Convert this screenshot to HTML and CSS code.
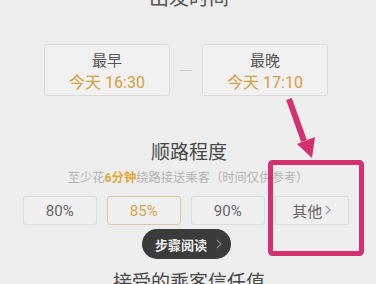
FILE: index.html
```html
<!DOCTYPE html>
<html lang="zh">
<head>
<meta charset="utf-8">
<link rel="stylesheet" href="styles.css">
</head>
<body>
<div class="page">
  <div class="title">出发时间</div>
  <div class="times">
    <div class="card">
      <div class="card-label">最早</div>
      <div class="card-time">今天 16:30</div>
    </div>
    <div class="dash"></div>
    <div class="card">
      <div class="card-label">最晚</div>
      <div class="card-time">今天 17:10</div>
    </div>
  </div>
  <div class="heading">顺路程度</div>
  <div class="sub">至少花<b>6分钟</b>绕路接送乘客（时间仅供参考）</div>
  <div class="opts">
    <div class="opt">80%</div>
    <div class="opt sel">85%</div>
    <div class="opt">90%</div>
    <div class="opt">其他<svg class="chev" width="6" height="10" viewBox="0 0 6 10"><polyline points="1,1 5,5 1,9" fill="none" stroke="#9a9a9a" stroke-width="1.1"/></svg></div>
  </div>
  <div class="pill-row">
    <div class="pill">步骤阅读<svg class="pill-chev" width="6" height="10" viewBox="0 0 6 10"><polyline points="1,1 5,5 1,9" fill="none" stroke="#8a8a8a" stroke-width="1.1"/></svg></div>
  </div>
  <div class="heading bottom">接受的乘客信任值</div>
  <svg class="annot" width="376" height="284" viewBox="0 0 376 284">
    <line x1="289" y1="99" x2="304" y2="141" stroke="#d4306f" stroke-width="6"/>
    <polygon points="297,144 315,137 312,158" fill="#d4306f"/>
    <rect x="270.5" y="162.5" width="91" height="91" rx="2" fill="none" stroke="#d4306f" stroke-width="5"/>
  </svg>
</div>
</body>
</html>
```
FILE: styles.css
```css
html, body {
  margin: 0;
  padding: 0;
  background: #eeeeee;
}
.page {
  position: relative;
  width: 376px;
  height: 284px;
  overflow: hidden;
  font-family: "Roboto", "Noto Sans CJK SC", sans-serif;
  color: #555;
}
.title {
  margin-top: -12px;
  text-align: center;
  font-size: 20px;
  line-height: 20px;
  color: #555;
  padding-left: 2px;
}
.times {
  display: flex;
  justify-content: center;
  align-items: center;
  margin-top: 36px;
  padding-right: 4px;
}
.card {
  box-sizing: border-box;
  width: 126px;
  height: 52px;
  border: 1px solid #dcdcdc;
  border-radius: 3px;
  background: #f1f1f1;
  padding-top: 7px;
  text-align: center;
}
.card-label {
  font-size: 15px;
  line-height: 18px;
  color: #555;
}
.card-time {
  margin-top: 2px;
  font-size: 16px;
  line-height: 22px;
  color: #d4a043;
}
.dash {
  width: 12px;
  height: 1px;
  background: #cccccc;
  margin: 0 10px;
}
.heading {
  margin-top: 45px;
  text-align: center;
  font-size: 19px;
  line-height: 24px;
  color: #484848;
  padding-left: 2px;
}
.sub {
  margin-top: 5px;
  text-align: center;
  font-size: 12.3px;
  line-height: 16px;
  color: #b3b3b3;
}
.sub b {
  color: #e0a83c;
  font-weight: 700;
}
.opts {
  display: flex;
  justify-content: flex-start;
  gap: 10.5px;
  margin-top: 10px;
  padding-left: 23px;
}
.opt {
  box-sizing: border-box;
  width: 73.5px;
  height: 29px;
  border: 1px solid #dddddd;
  border-radius: 3px;
  background: #f0f0f0;
  display: flex;
  align-items: center;
  justify-content: center;
  font-size: 15px;
  color: #666;
}
.opt.sel {
  border-color: #dcc8a0;
  color: #d7a448;
}
.chev {
  margin-left: 3px;
  margin-top: -1px;
}
.pill-row {
  display: flex;
  justify-content: center;
  margin-top: 4px;
  padding-right: 3px;
}
.pill {
  box-sizing: border-box;
  width: 89px;
  height: 30px;
  border-radius: 15px;
  background: #3b3b3b;
  color: #f2f2f2;
  font-size: 13px;
  font-weight: 700;
  display: flex;
  align-items: center;
  justify-content: center;
  padding-left: 4px;
}
.pill-chev {
  margin-left: 9px;
}
.heading.bottom {
  margin-top: 12px;
}
.annot {
  position: absolute;
  left: 0;
  top: 0;
}
```
